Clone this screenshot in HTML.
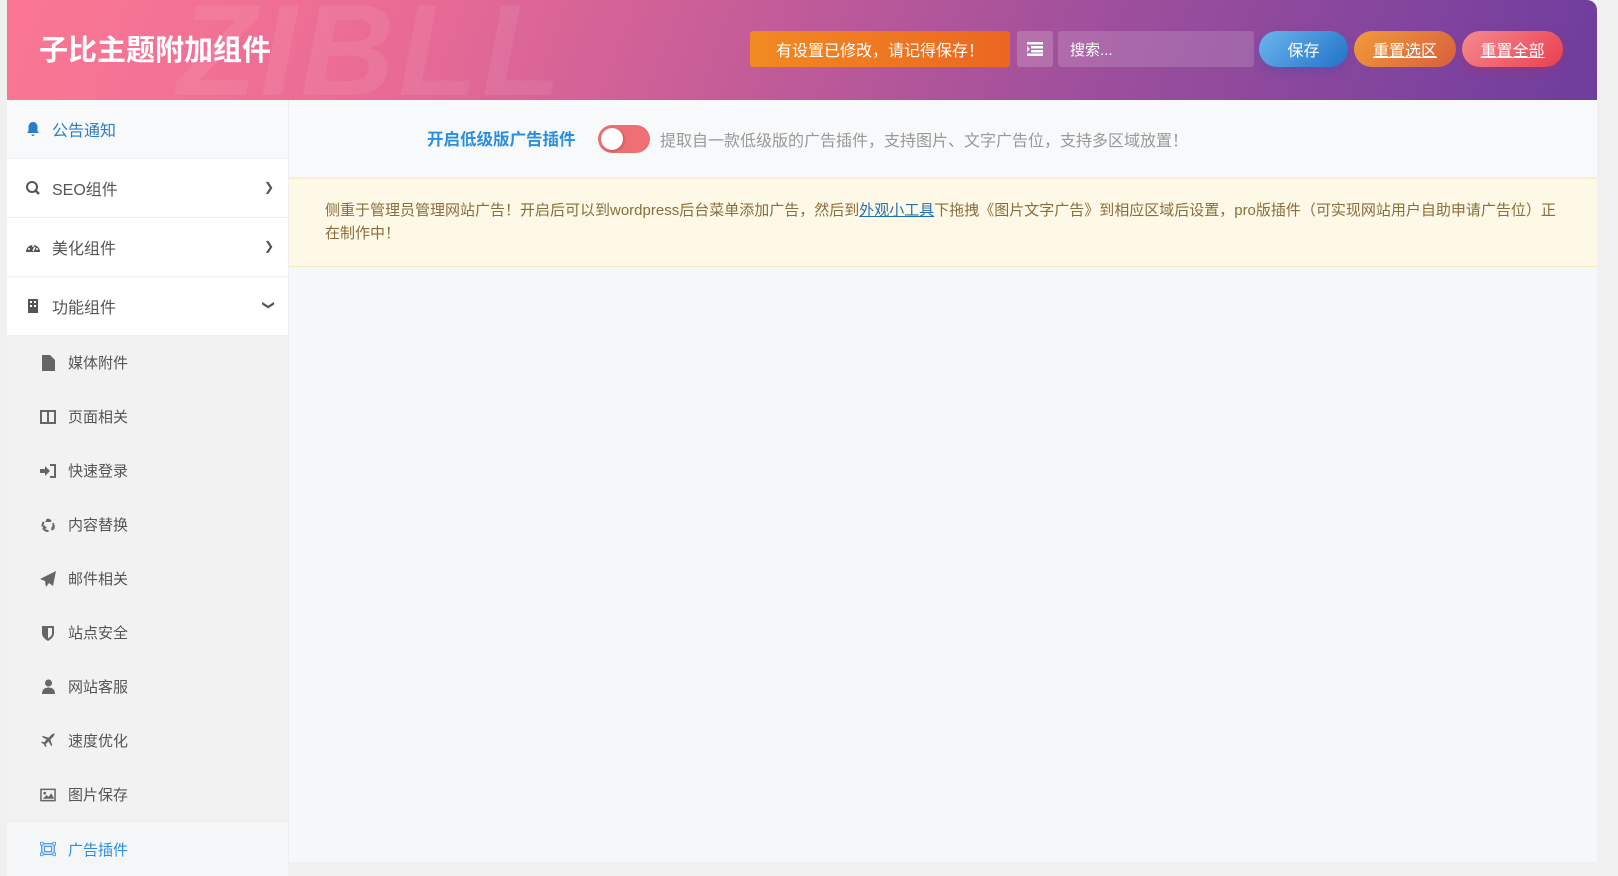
<!DOCTYPE html>
<html><head><meta charset="utf-8"><style>
*{box-sizing:border-box;margin:0;padding:0}
body{width:1618px;height:862px;overflow:hidden;background:#f0f0f1;font-family:"Liberation Sans","Noto Sans CJK SC",sans-serif;position:relative}
.wrap{position:absolute;left:7px;top:0;width:1590px;height:862px;background:#f6f7f9}
.hdr{position:absolute;left:0;top:0;width:1590px;height:100px;border-top-right-radius:10px;background:linear-gradient(110deg,#fb7793 0%,#e96b95 25%,#c75d98 45%,#9b4e9c 70%,#6e3d9e 100%);overflow:hidden}
.wm{position:absolute;left:170px;top:-25px;font:italic 900 130px "Liberation Sans",sans-serif;color:rgba(255,255,255,.07);letter-spacing:4px}
.title{position:absolute;left:32px;top:27px;font-size:29px;font-weight:bold;color:#fff}
.b{position:absolute;top:31px;height:36px;color:#fff;font-size:16px;display:flex;align-items:center;justify-content:center}
.side{position:absolute;left:0;top:100px;width:282px;height:762px;background:#fff;border-right:1px solid #eee}
.it{height:59px;display:flex;align-items:center;padding-left:18px;color:#555;font-size:16px;border-bottom:1px solid #f0f0f0;position:relative}
.it svg{margin-right:11px}
.arr{position:absolute;right:14px;top:21px;font-size:12px;color:#555}
.sub{background:#f2f2f2;height:486px}
.si{height:54px;display:flex;align-items:center;padding-left:33px;color:#555;font-size:15px;border-bottom:1px solid #efefef}
.si .ic{width:16px;height:16px;margin-right:12px;display:flex;align-items:center;justify-content:center}
.main{position:absolute;left:282px;top:100px;width:1308px}
</style></head><body>
<div class="wrap">
<div class="hdr">
<div class="wm">ZIBLL</div>
<div class="title">子比主题附加组件</div>
<div class="b" style="left:743px;width:260px;border-radius:3px;background:linear-gradient(90deg,#f18a22,#ec6621)">有设置已修改，请记得保存！</div>
<div class="b" style="left:1010px;width:36px;border-radius:3px;background:rgba(255,255,255,.18)"><svg width="16" height="14" viewBox="0 0 16 14"><rect x="0" y="0" width="16" height="2.5" fill="#fff"/><rect x="4" y="4" width="12" height="2.5" fill="#fff"/><rect x="4" y="8" width="12" height="2.5" fill="#fff"/><rect x="0" y="11.5" width="16" height="2.5" fill="#fff"/><path d="M0 4l3 3-3 3z" fill="#fff"/></svg></div>
<div class="b" style="left:1051px;width:196px;border-radius:3px;background:rgba(255,255,255,.15);justify-content:flex-start;padding-left:12px;font-size:15px">搜索...</div>
<div class="b" style="left:1252px;width:89px;border-radius:18px;background:linear-gradient(135deg,#6bb6ee,#2272c8);box-shadow:0 4px 10px rgba(40,80,180,.3)">保存</div>
<div class="b" style="left:1347px;width:102px;border-radius:18px;background:linear-gradient(135deg,#f29a3a,#d7603c);text-decoration:underline">重置选区</div>
<div class="b" style="left:1455px;width:101px;border-radius:18px;background:linear-gradient(135deg,#f58a8f,#ea3f4f);text-decoration:underline;box-shadow:0 4px 10px rgba(200,40,80,.3)">重置全部</div>
</div>
<div class="side">
<div class="it" style="background:#f8f9fa;color:#2a7ec5"><svg width="16" height="16" viewBox="0 0 16 16"><path d="M8 1c-3 0-4.5 2.5-4.5 5v4L2 12h12l-1.5-2V6C12.5 3.5 11 1 8 1zM6.5 13.5a1.5 1.5 0 003 0z" fill="#2a7ec5"/></svg>公告通知</div>
<div class="it"><svg width="16" height="16" viewBox="0 0 16 16"><circle cx="7" cy="7" r="5" fill="none" stroke="#555" stroke-width="2"/><path d="M10.5 10.5L14 14" stroke="#555" stroke-width="2.4"/></svg>SEO组件<span class="arr">❯</span></div>
<div class="it"><svg width="16" height="16" viewBox="0 0 16 16"><path d="M1 13a7 7 0 0114 0z" fill="#555"/><circle cx="4" cy="10" r="1" fill="#fff"/><circle cx="8" cy="7" r="1" fill="#fff"/><circle cx="12" cy="10" r="1" fill="#fff"/><path d="M8 12l2-4" stroke="#fff" stroke-width="1.5"/></svg>美化组件<span class="arr">❯</span></div>
<div class="it"><svg width="16" height="16" viewBox="0 0 16 16"><rect x="3" y="1" width="10" height="14" fill="#555"/><rect x="5" y="3" width="2" height="2" fill="#fff"/><rect x="9" y="3" width="2" height="2" fill="#fff"/><rect x="5" y="7" width="2" height="2" fill="#fff"/><rect x="9" y="7" width="2" height="2" fill="#fff"/></svg>功能组件<span class="arr" style="transform:rotate(90deg)">❯</span></div>
<div class="sub">
<div class="si"><span class="ic"><svg width="13" height="16" viewBox="0 0 13 16"><path d="M0 0h8l5 5v11H0z" fill="#666"/></svg></span>媒体附件</div>
<div class="si"><span class="ic"><svg width="16" height="14" viewBox="0 0 16 14"><rect x="1" y="1" width="14" height="12" fill="none" stroke="#666" stroke-width="2"/><path d="M8 1v12" stroke="#666" stroke-width="2"/></svg></span>页面相关</div>
<div class="si"><span class="ic"><svg width="16" height="14" viewBox="0 0 16 14"><path d="M0 5h5V2l5 5-5 5V9H0z" fill="#666"/><path d="M10 1h5v12h-5" fill="none" stroke="#666" stroke-width="2"/></svg></span>快速登录</div>
<div class="si"><span class="ic"><svg width="16" height="16" viewBox="0 0 16 16"><path d="M8 1l3 4H5zM2 13l2-5 3 3zM14 13l-3-3 4-1z" fill="#666"/><circle cx="8" cy="8.5" r="5.5" fill="none" stroke="#666" stroke-width="2" stroke-dasharray="5 3"/></svg></span>内容替换</div>
<div class="si"><span class="ic"><svg width="16" height="16" viewBox="0 0 16 16"><path d="M16 0L0 8l5 2 1 6 3-4 4 3z" fill="#666"/></svg></span>邮件相关</div>
<div class="si"><span class="ic"><svg width="12" height="16" viewBox="0 0 12 16"><path d="M0 1h12v7c0 4-3 6-6 8-3-2-6-4-6-8z" fill="#666"/><path d="M6 3h4v5c0 3-2 4-4 5.5z" fill="#f2f2f2"/></svg></span>站点安全</div>
<div class="si"><span class="ic"><svg width="13" height="15" viewBox="0 0 13 15"><circle cx="6.5" cy="4" r="3.5" fill="#666"/><path d="M0 15c0-5 3-6.5 6.5-6.5S13 10 13 15z" fill="#666"/></svg></span>网站客服</div>
<div class="si"><span class="ic"><svg width="15" height="15" viewBox="0 0 16 16"><path d="M15 1c-1-1-3 0-4 1L8 5 2 3 1 4l5 3-3 3-2-1-1 1 3 2 2 3 1-1-1-2 3-3 3 5 1-1-2-6 3-3c1-1 2-3 1-4z" fill="#666"/></svg></span>速度优化</div>
<div class="si"><span class="ic"><svg width="17" height="14" viewBox="0 0 17 14"><rect x="1" y="1" width="15" height="12" fill="none" stroke="#666" stroke-width="1.6"/><circle cx="5" cy="5" r="1.5" fill="#666"/><path d="M3 11l4-4 2 2 3-4 3 6z" fill="#666"/></svg></span>图片保存</div>
</div>
<div class="si" style="background:#f5f6f8;color:#2a8fe0;border:0"><span class="ic"><svg width="18" height="16" viewBox="0 0 18 16"><rect x="2" y="2" width="14" height="12" fill="none" stroke="#4a9cf0" stroke-width="1.5"/><rect x="5" y="5" width="8" height="6" fill="none" stroke="#4a9cf0" stroke-width="1.5"/><rect x="0.5" y="0.5" width="3" height="3" fill="#fff" stroke="#4a9cf0"/><rect x="14.5" y="0.5" width="3" height="3" fill="#fff" stroke="#4a9cf0"/><rect x="0.5" y="12.5" width="3" height="3" fill="#fff" stroke="#4a9cf0"/><rect x="14.5" y="12.5" width="3" height="3" fill="#fff" stroke="#4a9cf0"/></svg></span>广告插件</div>
</div>
<div class="main">
<div style="height:78px;position:relative;border-bottom:1px solid #eef0f2;background:#f8f9fa">
<div style="position:absolute;left:138px;top:26px;font-size:16.5px;font-weight:bold;color:#2a8fe0">开启低级版广告插件</div>
<div style="position:absolute;left:309px;top:25px;width:52px;height:28px;border-radius:14px;background:#ef7072"><div style="position:absolute;left:3px;top:3px;width:22px;height:22px;border-radius:50%;background:#fff;box-shadow:1px 1px 3px rgba(0,0,0,.25)"></div></div>
<div style="position:absolute;left:371px;top:27px;font-size:16px;color:#999">提取自一款低级版的广告插件，支持图片、文字广告位，支持多区域放置！</div>
</div>
<div style="height:89px;background:#fef8e6;border-bottom:1px solid #f6ebc8;border-top:1px solid #f9eed0;padding:20px 36px 0 36px;font-size:15px;line-height:23px;color:#8a6d3b">侧重于管理员管理网站广告！开启后可以到wordpress后台菜单添加广告，然后到<span style="color:#2271b1;text-decoration:underline">外观小工具</span>下拖拽《图片文字广告》到相应区域后设置，pro版插件（可实现网站用户自助申请广告位）正在制作中！</div>
</div>
</div>
</body></html>
